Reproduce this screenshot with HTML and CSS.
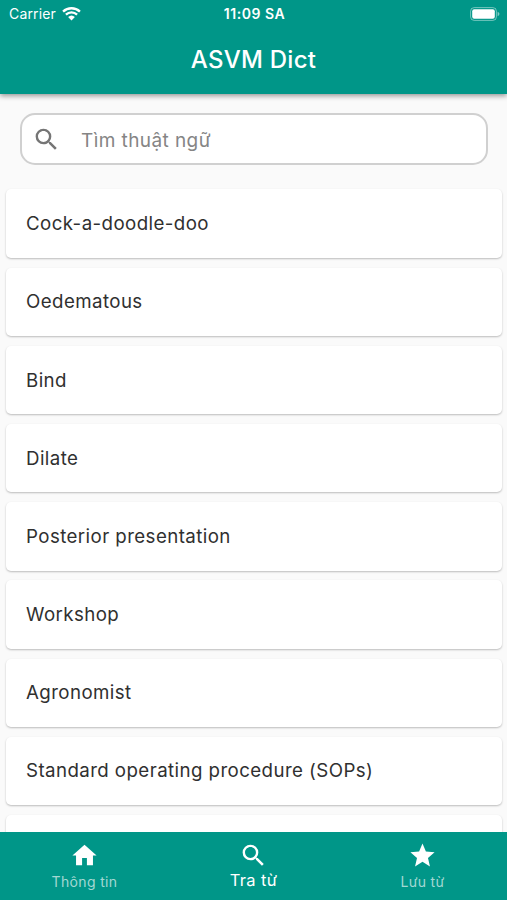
FILE: index.html
```
<!DOCTYPE html>
<html lang="vi">
<head>
    <meta charset="UTF-8">
    <meta name="viewport" content="width=device-width, initial-scale=1.0">
    <title>ASVM Dict</title>
    <link rel="stylesheet" href="styles.css">
</head>
<body>
    <header class="header">
        <div class="status-bar">
            <div class="carrier">
                <span>Carrier</span>
                <svg class="wifi" viewBox="0 0 18 14">
                    <path d="M1 5.2a11.6 11.6 0 0 1 16 0M3.7 8.1a7.7 7.7 0 0 1 10.6 0" fill="none" stroke="#fff" stroke-width="2.2"/>
                    <path d="M5.8 10.3a4.8 4.8 0 0 1 6.4 0L9 13.6z" fill="#fff"/>
                </svg>
            </div>
            <div class="time">11:09 SA</div>
            <svg class="battery" viewBox="0 0 30 14">
                <rect x=".6" y=".6" width="25.8" height="12.8" rx="3.6" fill="none" stroke="#fff" stroke-opacity=".45"/>
                <rect x="2.2" y="2.2" width="22.6" height="9.6" rx="2" fill="#fff"/>
                <path d="M27.6 4.8c2.4.8 2.4 3.6 0 4.4z" fill="#fff" fill-opacity=".5"/>
            </svg>
        </div>
        <h1>ASVM Dict</h1>
    </header>

    <main class="content">
        <label class="search">
            <svg class="icon" viewBox="0 0 24 24"><path d="M15.5 14h-.79l-.28-.27A6.47 6.47 0 0 0 16 9.5 6.5 6.5 0 1 0 9.5 16c1.61 0 3.09-.59 4.23-1.57l.27.28v.79l5 4.99L20.49 19l-4.99-5zm-6 0C7.01 14 5 11.99 5 9.5S7.01 5 9.5 5 14 7.01 14 9.5 11.99 14 9.5 14z"/></svg>
            <input type="text" placeholder="Tìm thuật ngữ">
        </label>

        <ul class="words">
            <li>Cock-a-doodle-doo</li>
            <li>Oedematous</li>
            <li>Bind</li>
            <li>Dilate</li>
            <li>Posterior presentation</li>
            <li>Workshop</li>
            <li>Agronomist</li>
            <li>Standard operating procedure (SOPs)</li>
            <li></li>
        </ul>
    </main>

    <nav class="tabs">
        <a class="tab">
            <svg class="icon" viewBox="0 0 24 24"><path d="M10 20v-6h4v6h5v-8h3L12 3 2 12h3v8z"/></svg>
            <span>Thông tin</span>
        </a>
        <a class="tab active">
            <svg class="icon" viewBox="0 0 24 24"><path d="M15.5 14h-.79l-.28-.27A6.47 6.47 0 0 0 16 9.5 6.5 6.5 0 1 0 9.5 16c1.61 0 3.09-.59 4.23-1.57l.27.28v.79l5 4.99L20.49 19l-4.99-5zm-6 0C7.01 14 5 11.99 5 9.5S7.01 5 9.5 5 14 7.01 14 9.5 11.99 14 9.5 14z"/></svg>
            <span>Tra từ</span>
        </a>
        <a class="tab">
            <svg class="icon" viewBox="0 0 24 24"><path d="M12 17.27 18.18 21l-1.64-7.03L22 9.24l-7.19-.61L12 2 9.19 8.63 2 9.24l5.46 4.73L5.82 21z"/></svg>
            <span>Lưu từ</span>
        </a>
    </nav>
</body>
</html>
```

FILE: styles.css
```
* {
    box-sizing: border-box;
}

body {
    display: flex;
    flex-direction: column;
    height: 900px;
    margin: 0;
    overflow: hidden;
    font-family: Inter, "Noto Sans", sans-serif;
    background-color: #fafafa;
    color: #303030;
}

.header {
    flex: none;
    height: 94px;
    background-color: #009688;
    color: #fff;
    box-shadow: 0 2px 5px rgba(0, 0, 0, 0.4);
    z-index: 1;
}

.status-bar {
    display: grid;
    grid-template-columns: 1fr auto 1fr;
    align-items: center;
    height: 27px;
    padding: 0 7px 0 9px;
    font-size: 14px;
}

.carrier {
    display: flex;
    align-items: center;
    gap: 6px;
    letter-spacing: 0.15px;
}

.wifi {
    width: 19px;
    height: 15px;
}

.time {
    font-size: 14px;
    font-weight: 600;
    letter-spacing: 0.55px;
}

.battery {
    justify-self: end;
    width: 30px;
    height: 14px;
}

h1 {
    margin: 0;
    font-size: 24px;
    font-weight: 500;
    line-height: 66px;
    letter-spacing: 0.25px;
    text-align: center;
}

.content {
    flex: 1;
    min-height: 0;
    overflow: hidden;
}

.icon {
    flex: none;
    width: 29px;
    height: 29px;
    fill: currentColor;
}

.search {
    display: flex;
    align-items: center;
    gap: 20px;
    height: 52px;
    margin: 19px 19px 0 20px;
    padding-left: 10px;
    border: 2px solid #d0d0d0;
    border-radius: 15px;
    background-color: #fff;
    color: #757575;
}

.search input {
    flex: 1;
    padding: 2px 0 0;
    border: none;
    outline: none;
    background: none;
    font: inherit;
    font-size: 19px;
    letter-spacing: 0.42px;
}

.search input::placeholder {
    color: #858585;
}

.words {
    display: grid;
    gap: 9.7px;
    margin: 24.4px 5px 0 6px;
    padding: 0;
    list-style: none;
}

.words li {
    display: flex;
    align-items: center;
    height: 68.5px;
    padding: 0 20px;
    border-radius: 5px;
    background-color: #fff;
    box-shadow: 0 1px 2px rgba(0, 0, 0, 0.25);
    font-size: 18.7px;
    letter-spacing: 0.42px;
}

.tabs {
    display: grid;
    grid-template-columns: repeat(3, 1fr);
    flex: none;
    height: 68.5px;
    background-color: #009688;
    color: #fff;
}

.tab {
    display: flex;
    flex-direction: column;
    align-items: center;
    padding-top: 9px;
    font-size: 14px;
    letter-spacing: 0.35px;
}

.tab span {
    line-height: 24px;
    color: #a3d8d3;
}

.tab.active span {
    margin-top: -2px;
    font-size: 16.5px;
    color: #fff;
}
```
